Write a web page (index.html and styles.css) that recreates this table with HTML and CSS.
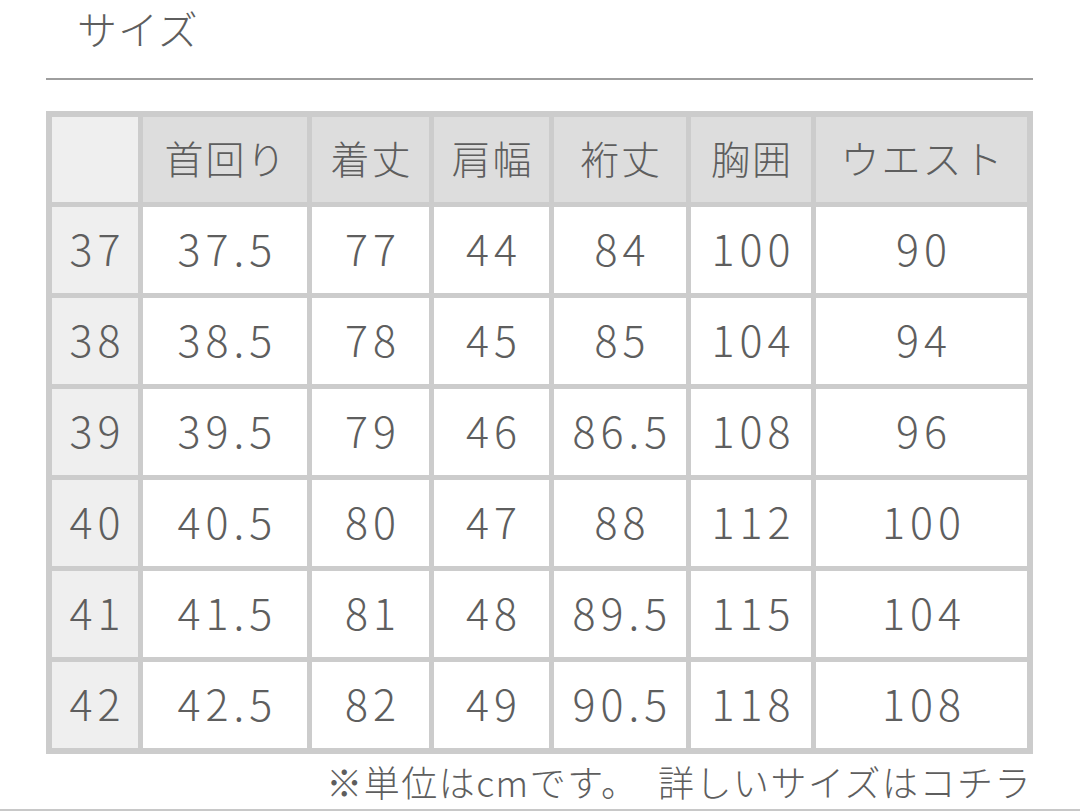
FILE: index.html
```html
<!DOCTYPE html>
<html lang="ja">
<head>
<meta charset="utf-8">
<title>サイズ</title>
<link rel="stylesheet" href="styles.css">
</head>
<body>
<div class="page">
  <div class="head">
    <h2 class="title">サイズ</h2>
  </div>
  <div class="size-table">
    <div class="c corner"></div>
    <div class="c th">首回り</div>
    <div class="c th">着丈</div>
    <div class="c th">肩幅</div>
    <div class="c th">裄丈</div>
    <div class="c th">胸囲</div>
    <div class="c th">ウエスト</div>

    <div class="c rh">37</div><div class="c td">37.5</div><div class="c td">77</div><div class="c td">44</div><div class="c td">84</div><div class="c td">100</div><div class="c td">90</div>
    <div class="c rh">38</div><div class="c td">38.5</div><div class="c td">78</div><div class="c td">45</div><div class="c td">85</div><div class="c td">104</div><div class="c td">94</div>
    <div class="c rh">39</div><div class="c td">39.5</div><div class="c td">79</div><div class="c td">46</div><div class="c td">86.5</div><div class="c td">108</div><div class="c td">96</div>
    <div class="c rh">40</div><div class="c td">40.5</div><div class="c td">80</div><div class="c td">47</div><div class="c td">88</div><div class="c td">112</div><div class="c td">100</div>
    <div class="c rh">41</div><div class="c td">41.5</div><div class="c td">81</div><div class="c td">48</div><div class="c td">89.5</div><div class="c td">115</div><div class="c td">104</div>
    <div class="c rh">42</div><div class="c td">42.5</div><div class="c td">82</div><div class="c td">49</div><div class="c td">90.5</div><div class="c td">118</div><div class="c td">108</div>
  </div>
  <p class="note">※単位はcmです。　詳しいサイズはコチラ</p>
</div>
<div class="bottom-rule"></div>
</body>
</html>
```

FILE: styles.css
```css
html, body {
  margin: 0;
  padding: 0;
  background: #ffffff;
}

body {
  font-family: "Noto Sans CJK JP", "Noto Sans", sans-serif;
  color: #5e5e5e;
  width: 1080px;
  height: 811px;
  overflow: hidden;
}

.page {
  width: 987px;
  margin-left: 46px;
}

.head {
  padding-top: 0;
  border-bottom: 2px solid #9e9e9e;
  margin-bottom: 31px;
}

.title {
  margin: 0 0 22px 31px;
  font-size: 40px;
  font-weight: 300;
  line-height: 56px;
  letter-spacing: 1px;
}

.size-table {
  display: grid;
  grid-template-columns: 86px 164px 117px 115px 132px 120px 211px;
  grid-template-rows: 85px repeat(6, 86px);
  gap: 5px;
  padding: 6px;
  background: #cccccc;
}

.c {
  display: flex;
  align-items: center;
  justify-content: center;
  font-weight: 300;
  line-height: 1;
  padding-bottom: 5px;
}

.corner {
  background: #efefef;
}

.th {
  background: #dddddd;
  font-size: 39px;
  letter-spacing: 2px;
  padding-left: 2px;
}

.rh {
  background: #efefef;
  font-size: 43px;
  letter-spacing: 5px;
  padding-left: 5px;
}

.td {
  background: #ffffff;
  font-size: 43px;
  letter-spacing: 5px;
  padding-left: 5px;
}

.note {
  margin: 7px 1px 0 0;
  text-align: right;
  font-size: 36px;
  font-weight: 300;
  line-height: 40px;
  letter-spacing: 1.5px;
}

.bottom-rule {
  margin-top: 8px;
  height: 2px;
  background: #c8c8c8;
}
```
